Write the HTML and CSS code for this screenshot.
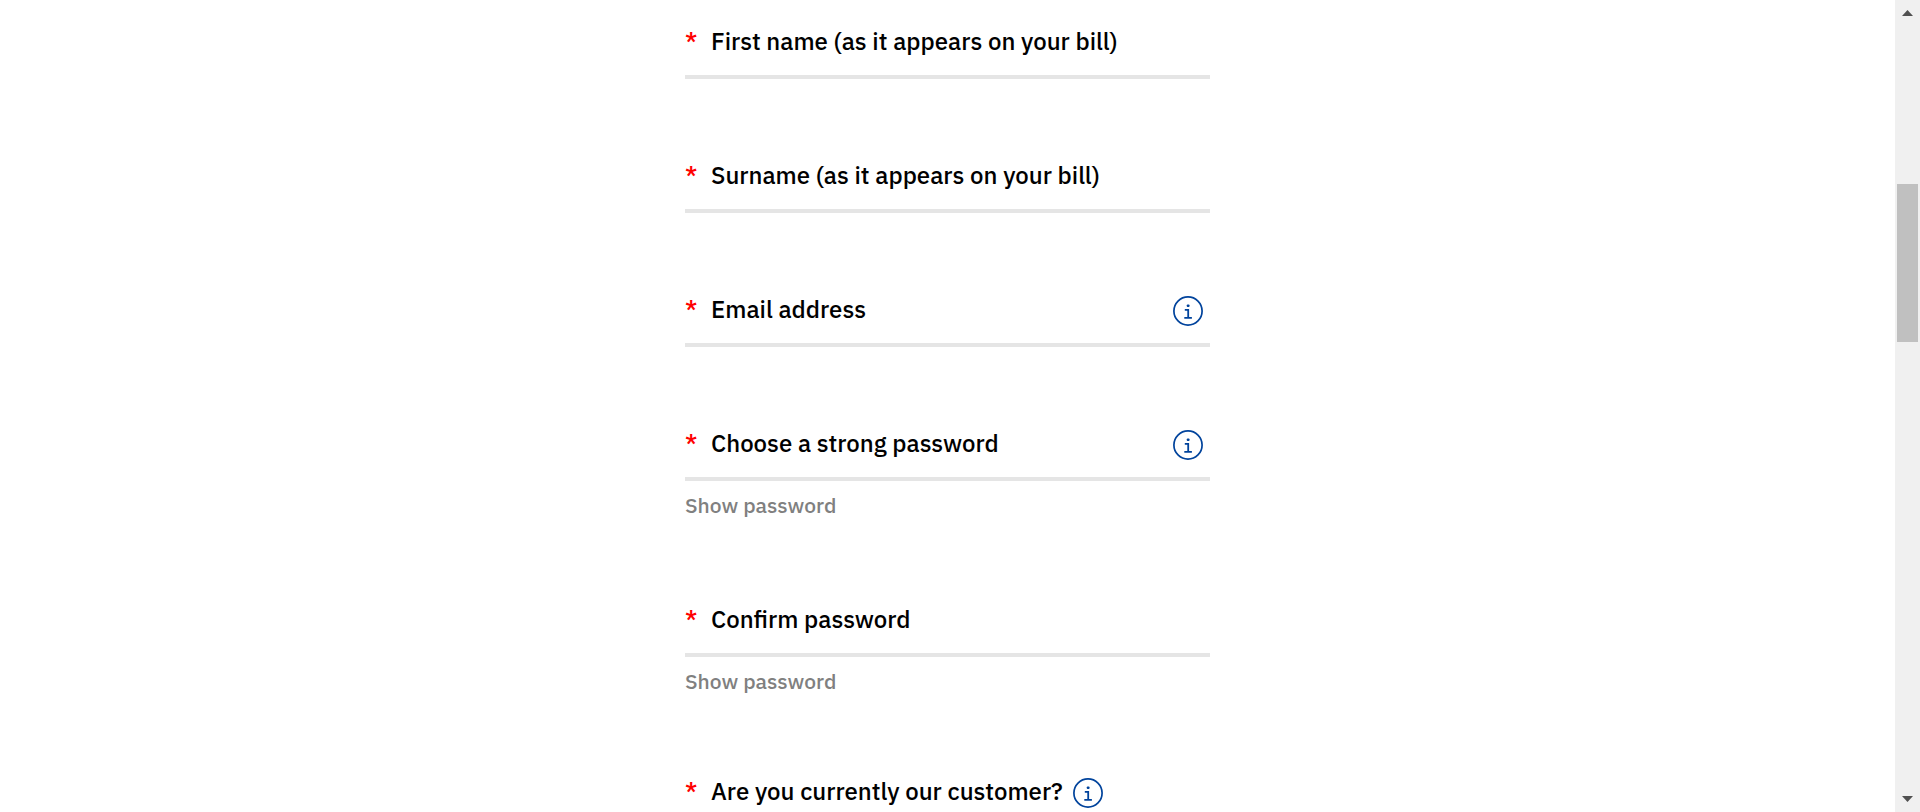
FILE: index.html
```html
<!DOCTYPE html>
<html lang="en">
<head>
<meta charset="utf-8">
<title>Create your account</title>
<link rel="stylesheet" href="styles.css">
</head>
<body>
<svg class="sprite" aria-hidden="true">
  <symbol id="info" viewBox="0 0 30 30">
    <circle cx="15" cy="15" r="14.1" fill="none" stroke="currentColor" stroke-width="1.7"/>
    <rect x="13.8" y="8.4" width="2.7" height="2.6" rx="0.8" fill="currentColor"/>
    <path d="M11.8 13.9h3.4v7.8M11.3 21.8h7.6" fill="none" stroke="currentColor" stroke-width="1.8"/>
  </symbol>
</svg>
<main class="page">
  <form class="form">
    <div class="field">
      <label class="label" for="first-name"><span class="required">*</span>First name (as it appears on your bill)</label>
      <input class="input" id="first-name" type="text" required>
    </div>
    <div class="field">
      <label class="label" for="surname"><span class="required">*</span>Surname (as it appears on your bill)</label>
      <input class="input" id="surname" type="text" required>
    </div>
    <div class="field">
      <label class="label" for="email"><span class="required">*</span>Email address</label>
      <input class="input" id="email" type="email" required>
      <button class="info info-end" type="button" aria-label="About email address"><svg class="icon"><use href="#info"/></svg></button>
    </div>
    <div class="field-group">
      <div class="field">
        <label class="label" for="password"><span class="required">*</span>Choose a strong password</label>
        <input class="input" id="password" type="password" required>
        <button class="info info-end" type="button" aria-label="About passwords"><svg class="icon"><use href="#info"/></svg></button>
      </div>
      <button class="show" type="button">Show password</button>
    </div>
    <div class="field-group">
      <div class="field">
        <label class="label" for="confirm"><span class="required">*</span>Confirm password</label>
        <input class="input" id="confirm" type="password" required>
      </div>
      <button class="show" type="button">Show password</button>
    </div>
    <div class="question">
      <span class="label"><span class="required">*</span>Are you currently our customer?</span>
      <button class="info" type="button" aria-label="About being a customer"><svg class="icon"><use href="#info"/></svg></button>
    </div>
  </form>
</main>
<div class="scrollbar" aria-hidden="true">
  <svg class="arrow" viewBox="0 0 11 6"><path d="M5.5 0L11 6H0z"/></svg>
  <div class="track"><div class="thumb"></div></div>
  <svg class="arrow" viewBox="0 0 11 6"><path d="M5.5 6L11 0H0z"/></svg>
</div>
</body>
</html>
```
FILE: styles.css
```css
* {
  box-sizing: border-box;
}

body {
  display: flex;
  height: 100vh;
  margin: 0;
  overflow: hidden;
  background: #fff;
  color: #000;
  font-family: "IBM Plex Sans", Roboto, sans-serif;
  font-size: 24px;
  font-weight: 500;
  line-height: 32px;
}

button {
  padding: 0;
  border: 0;
  background: none;
  font: inherit;
  cursor: pointer;
}

.sprite {
  position: absolute;
  width: 0;
  height: 0;
}

.page {
  flex: 1;
  min-width: 0;
  overflow: hidden;
}

.form {
  display: flex;
  flex-direction: column;
  gap: 80px;
  max-width: 525px;
  margin: 0 auto;
  padding-top: 25px;
}

.field {
  display: grid;
}

.label,
.input,
.info-end {
  grid-area: 1 / 1;
}

.label {
  z-index: 1;
  display: flex;
  align-self: start;
  justify-self: start;
}

.required {
  width: 26px;
  color: #f00;
}

.input {
  width: 100%;
  height: 54px;
  padding: 0;
  border: 0;
  border-bottom: 4px solid #e5e5e5;
  background: none;
  font: inherit;
  outline: none;
}

.input:focus {
  border-color: #00439c;
}

.info {
  z-index: 1;
  width: 30px;
  height: 30px;
  margin-top: 3px;
  color: #00439c;
}

.info-end {
  align-self: start;
  justify-self: end;
  margin-right: 7px;
}

.icon {
  display: block;
  width: 30px;
  height: 30px;
}

.show {
  display: block;
  margin: 8px 0 2px;
  color: #808080;
  font-size: 21px;
}

.question {
  display: flex;
  align-items: flex-start;
  gap: 10px;
  margin-top: -4px;
}

.scrollbar {
  display: flex;
  flex-direction: column;
  align-items: center;
  width: 25px;
  padding: 10px 0;
  background: #f0f0f0;
}

.arrow {
  width: 11px;
  height: 6px;
  fill: #505050;
}

.track {
  flex: 1;
  width: 21px;
  padding-top: 168px;
}

.thumb {
  height: 158px;
  background: #c0c0c0;
}
```
